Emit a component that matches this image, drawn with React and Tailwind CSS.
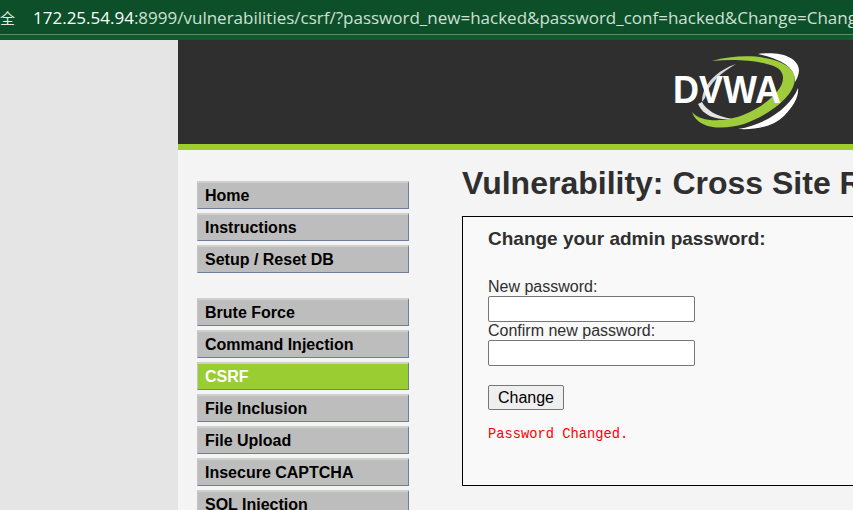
import React from "react";

const topLinks = ["Home", "Instructions", "Setup / Reset DB"];
const vulnLinks = [
  "Brute Force",
  "Command Injection",
  "CSRF",
  "File Inclusion",
  "File Upload",
  "Insecure CAPTCHA",
  "SQL Injection",
];

const MenuItem = ({ label }) => {
  const active = label === "CSRF";
  return (
    <li
      className={
        "h-7 pl-[7px] flex items-center border-t-2 border-r border-b border-l border-t-[#cfcfcf] border-r-[#6e7f9c] border-b-[#6e7f9c] border-l-[#c4c4c4] text-base font-bold leading-none " +
        (active ? "bg-[#9acd32] text-white border-[#7d93b5] border-t-[#7d93b5]" : "bg-[#bdbdbd] text-black")
      }
    >
      {label}
    </li>
  );
};

const Logo = () => (
  <svg width="136" height="80" viewBox="0 0 136 80" className="block">
    <path d="M38 9 C70 0 112 4 120 22 C126 40 98 62 70 72 C50 78 24 78 18 60 C28 72 56 70 76 60 C100 48 116 30 106 18 C98 10 66 6 38 9 Z" fill="#9fcc3b" />
    <path d="M84 2 C104 -1 124 4 125 18 C125 22 123 27 121 30 C122 18 112 8 84 2 Z" fill="#ffffff" />
    <path d="M124 36 C118 52 96 72 64 77 C84 78 100 74 110 64 C120 54 125 44 124 36 Z" fill="#ffffff" />
    <path d="M28 50 C28 32 44 18 62 12 C48 20 34 32 31 46 Z" fill="#d8d8d8" />
    <path d="M24 52 C30 66 46 68 58 67 C42 64 32 58 28 50 Z" fill="#e4e4e4" />
    <text x="-1" y="51" fontFamily="Liberation Sans, sans-serif" fontWeight="700" fontSize="39" fill="#ffffff" textLength="108" lengthAdjust="spacingAndGlyphs">
      DVWA
    </text>
  </svg>
);

const App = () => {
  return (
    <div className="w-[853px] h-[510px] overflow-hidden bg-[#e5e5e5] font-['Liberation_Sans',sans-serif]">
      <div className="h-[40px] bg-[#0c4f28] flex flex-col">
        <div className="h-[34px] flex items-center overflow-hidden">
          <span className="w-[33px] shrink-0 text-[15px] leading-none text-[#dfe9e2] font-['Noto_Sans_CJK_SC',sans-serif]">全</span>
          <span className="whitespace-nowrap text-[17px] leading-none text-[#cfe0d6] font-['Open_Sans',sans-serif]">
            <span className="text-white">172.25.54.94</span>:8999/vulnerabilities/csrf/?password_new=hacked&amp;password_conf=hacked&amp;Change=Change
          </span>
        </div>
        <div className="h-px bg-[#5c8a6d]" />
        <div className="flex-1 bg-[#13592e]" />
      </div>

      <div className="flex h-[470px]">
        <div className="w-[178px] shrink-0" />
        <div className="flex-1 min-w-0 flex flex-col overflow-hidden bg-[#f4f4f4]">
          <header className="h-[110px] shrink-0 bg-[#2f2f2f] border-b-[6px] border-[#9fcc2f] pl-[496px] pt-[12px]">
            <Logo />
          </header>

          <div className="flex pl-[19px] pt-[31px] text-[#2f2f2f]">
            <nav className="w-[212px] shrink-0">
              <ul className="flex flex-col gap-1">
                {topLinks.map((l) => (
                  <MenuItem key={l} label={l} />
                ))}
              </ul>
              <ul className="flex flex-col gap-1 mt-[25px]">
                {vulnLinks.map((l) => (
                  <MenuItem key={l} label={l} />
                ))}
              </ul>
            </nav>

            <main className="ml-[53px] w-[600px] shrink-0">
              <h1 className="text-[32px] leading-[37px] font-bold whitespace-nowrap -mt-[16px]">
                Vulnerability: Cross Site Request Forgery (CSRF)
              </h1>
              <div className="mt-[14px] h-[270px] border border-black bg-[#f9f9f9] pl-[25px] pt-[11px]">
                <h3 className="text-[19px] leading-[22px] font-bold">Change your admin password:</h3>
                <form className="mt-[26px] flex flex-col items-start text-base">
                  <label className="leading-[19px] mt-[1px]">New password:</label>
                  <input className="w-[207px] h-[26px] bg-white border border-[#767676] rounded-[2px]" />
                  <label className="leading-[18px] mt-[0px]">Confirm new password:</label>
                  <input className="w-[207px] h-[26px] bg-white border border-[#767676] rounded-[2px]" />
                  <button className="mt-[19px] w-[76px] h-[25px] bg-[#efefef] border border-[#767676] rounded-[2px] text-black text-base leading-none">
                    Change
                  </button>
                </form>
                <pre className="mt-[17px] text-[13.75px] leading-[16px] text-[#ff0000] font-['Liberation_Mono',monospace]">Password Changed.</pre>
              </div>
              <h2 className="mt-[20px] text-2xl leading-7 font-bold whitespace-nowrap">More Information</h2>
            </main>
          </div>
        </div>
      </div>
    </div>
  );
};

export default App;
